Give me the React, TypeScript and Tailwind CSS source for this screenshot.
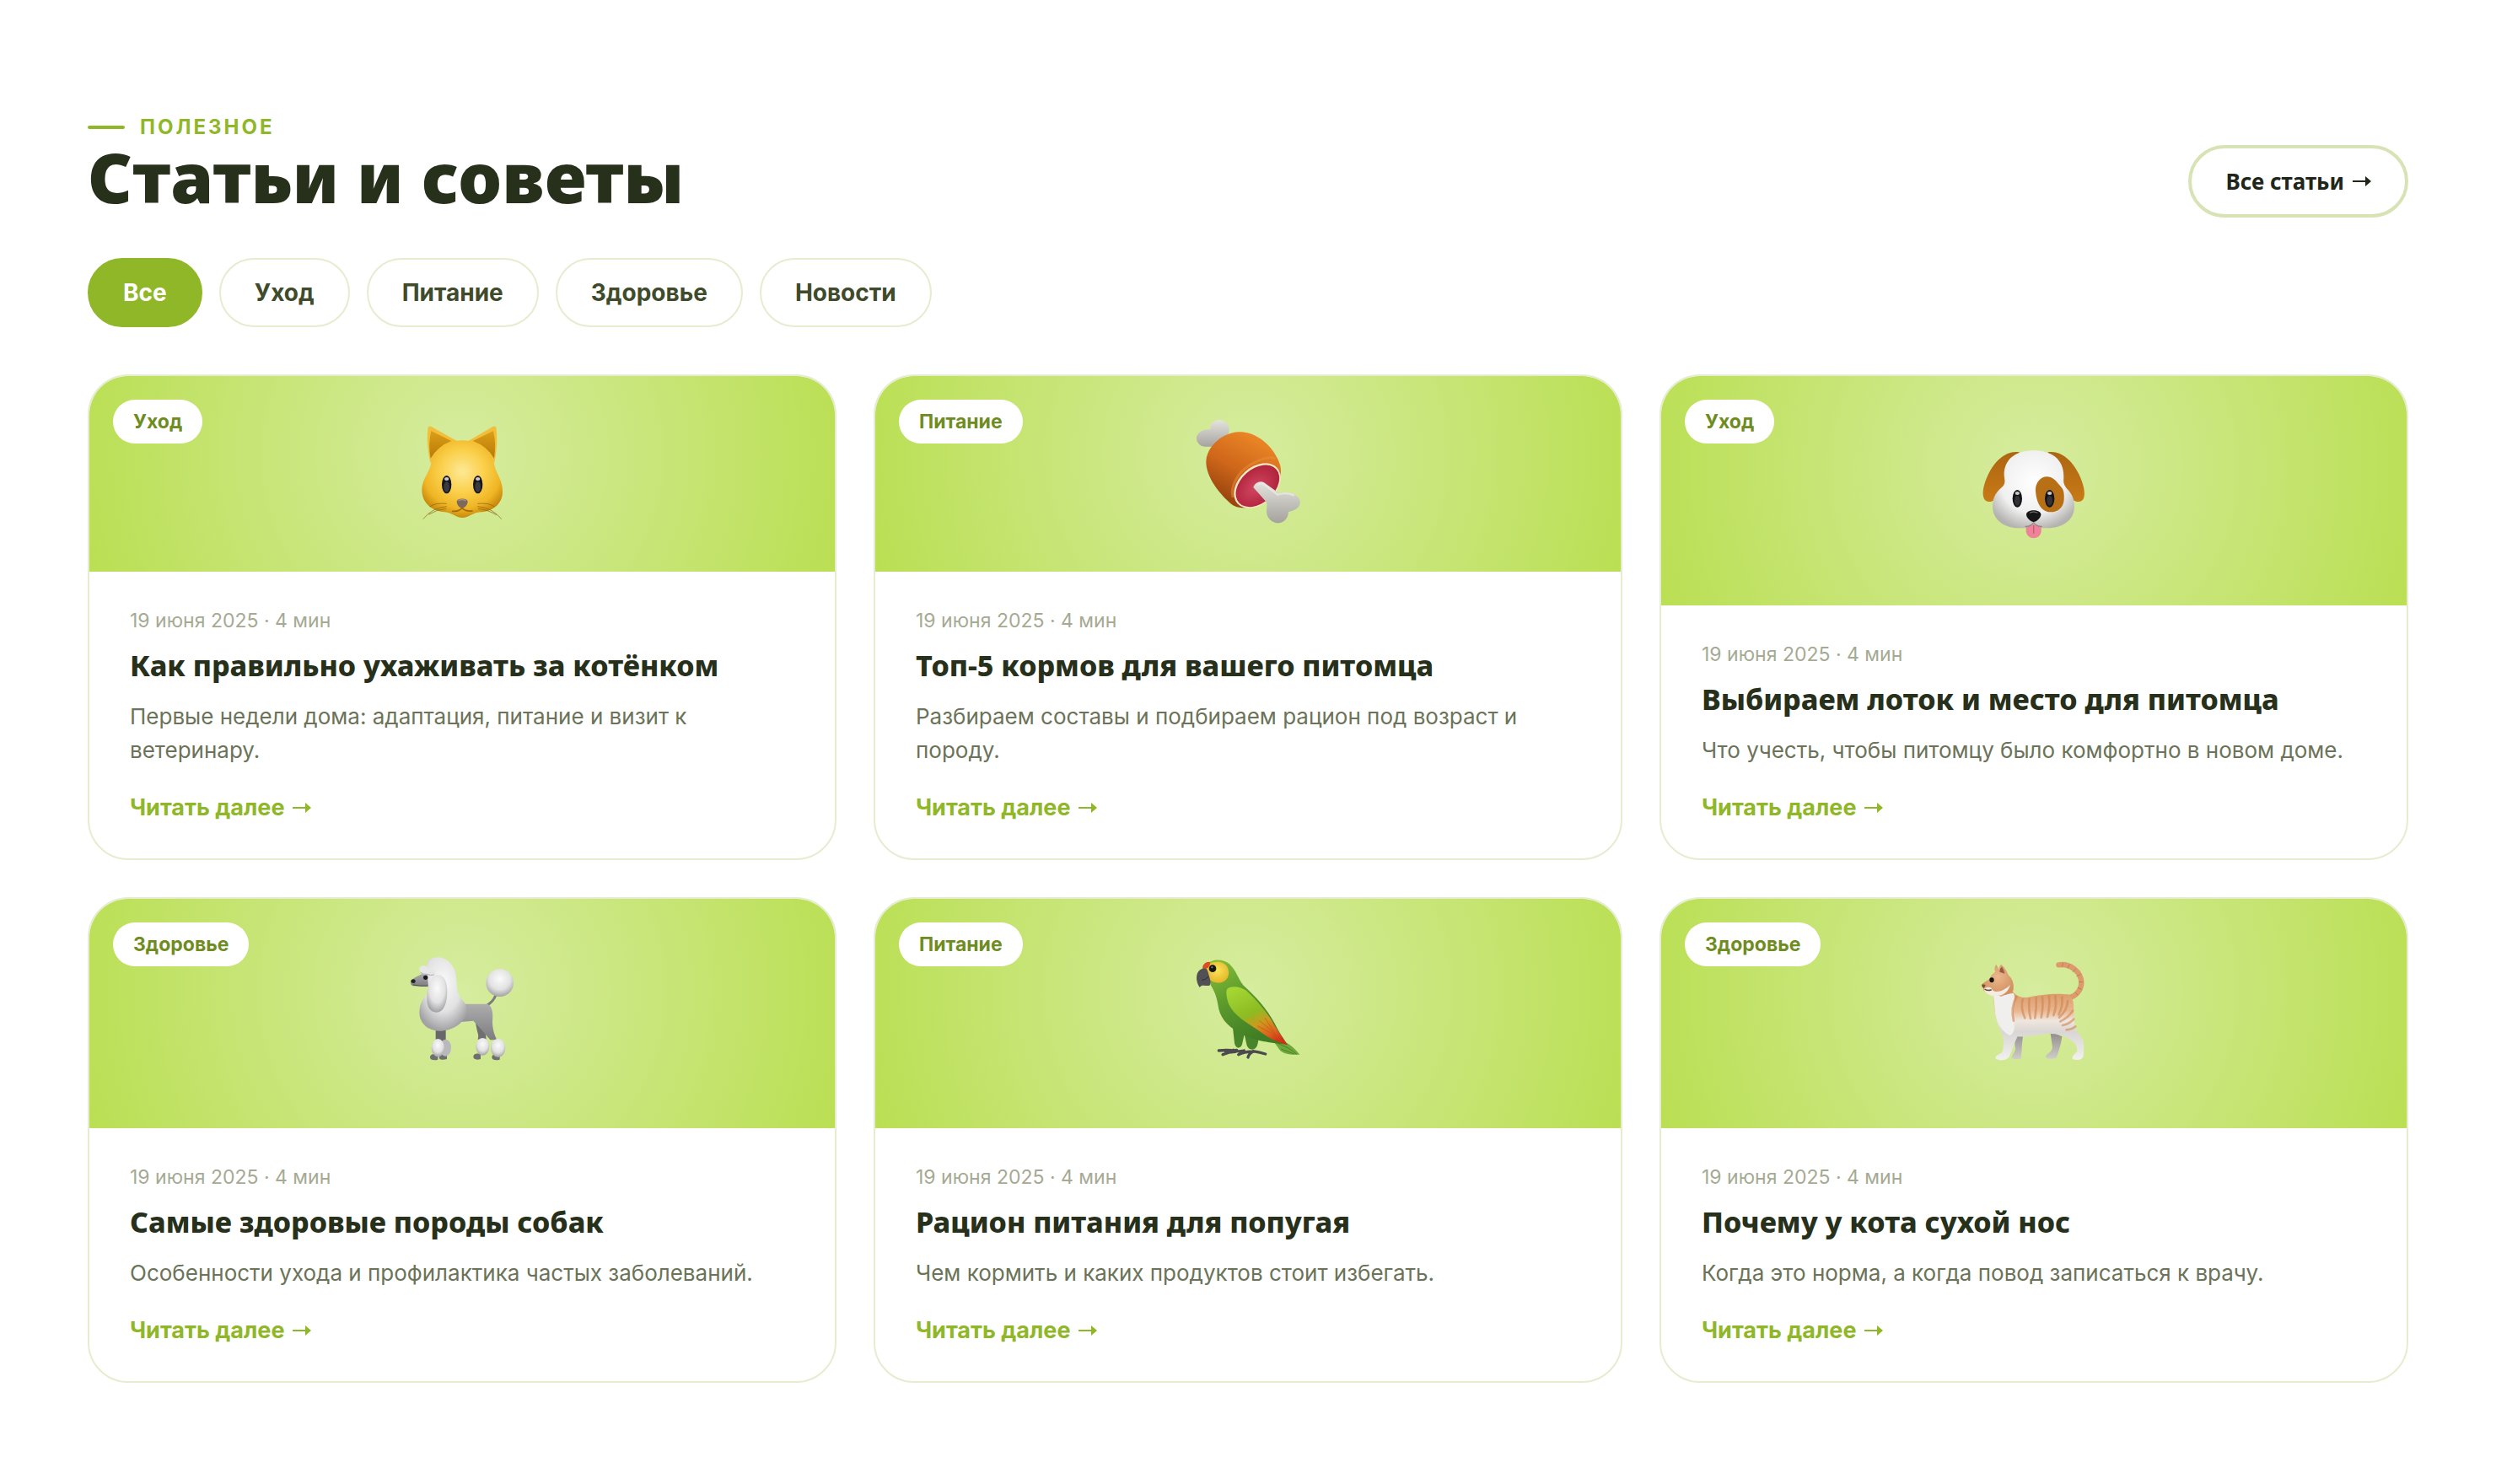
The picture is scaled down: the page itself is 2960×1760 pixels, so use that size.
import React, { useState } from "react";

const categories = ["Все", "Уход", "Питание", "Здоровье", "Новости"];

function CatFace() {
  return (
    <svg viewBox="-6 6 480 480" className="size-40" aria-hidden="true">
      <defs>
        <radialGradient id="catface-skin" cx="0.5" cy="0.4" r="0.6">
          <stop offset="0" stopColor="#fde995" />
          <stop offset="0.45" stopColor="#fbd04c" />
          <stop offset="0.8" stopColor="#efb524" />
          <stop offset="1" stopColor="#c98a0c" />
        </radialGradient>
        <linearGradient id="catface-ear" x1="0" y1="0" x2="0" y2="1">
          <stop offset="0" stopColor="#dc9f16" />
          <stop offset="1" stopColor="#b87a08" />
        </linearGradient>
      </defs>
      <path d="M113 80q5-6 12-2l92 52-96 76q-16-70-8-126z" fill="#f3bf3a" />
      <path d="M355 80q-5-6-12-2l-88 52 94 76q14-70 6-126z" fill="#f3bf3a" />
      <path d="M124 93l72 36q-48 18-74 62-10-54 2-98z" fill="url(#catface-ear)" />
      <path d="M345 93l-73 36q50 18 76 62 8-54-3-98z" fill="url(#catface-ear)" />
      <path
        d="M235 127c64 0 106 38 115 92 7 28 28 50 28 90 0 44-36 72-80 73-26 2-40 20-63 20s-38-18-62-20c-46-3-82-32-82-78 0-38 24-60 31-88 10-54 52-89 113-89z"
        fill="url(#catface-skin)"
      />
      <ellipse cx="179" cy="284" rx="17" ry="32" fill="#17171b" />
      <ellipse cx="179" cy="292" rx="10" ry="19" fill="#3a3a42" />
      <ellipse cx="179" cy="264" rx="8" ry="6" fill="#c9c9ce" />
      <ellipse cx="290" cy="284" rx="17" ry="32" fill="#17171b" />
      <ellipse cx="290" cy="292" rx="10" ry="19" fill="#3a3a42" />
      <ellipse cx="290" cy="264" rx="8" ry="6" fill="#c9c9ce" />
      <path d="M215 345c0-14 39-14 39 0 0 10-10 22-20 22s-19-12-19-22z" fill="#7d6a5c" />
      <path d="M220 342q14-8 28 0" stroke="#a5958a" strokeWidth="4" fill="none" />
      <path d="M234 367q-10 14-34 12M234 367q12 14 36 11" stroke="#a06a0a" strokeWidth="5" fill="none" strokeLinecap="round" />
      <path
        d="M178 352q-40-4-58 10M178 362q-50 4-82 44M176 370q-30 2-60 20M290 352q40-4 58 10M290 362q50 4 84 44M292 370q36 4 64 22"
        stroke="#8a5c12"
        strokeWidth="2"
        fill="none"
        strokeLinecap="round"
      />
    </svg>
  );
}

function Meat() {
  return (
    <svg viewBox="0 6 480 480" className="size-40" aria-hidden="true">
      <defs>
        <linearGradient id="meat-bone" x1="0" y1="0" x2="0" y2="1">
          <stop offset="0" stopColor="#e4e3de" />
          <stop offset="1" stopColor="#a5a29d" />
        </linearGradient>
        <linearGradient id="meat-skin" x1="0.7" y1="0" x2="0.2" y2="1">
          <stop offset="0" stopColor="#ee8a28" />
          <stop offset="0.5" stopColor="#cf661a" />
          <stop offset="1" stopColor="#8a3c0c" />
        </linearGradient>
        <radialGradient id="meat-cut" cx="0.45" cy="0.5" r="0.6">
          <stop offset="0" stopColor="#d24862" />
          <stop offset="1" stopColor="#ac1f38" />
        </radialGradient>
      </defs>
      <path
        d="M106 88c-2-20 14-34 34-34 22 2 34 20 33 40-2 14-10 20-16 28l-32 30c-18-6-32 0-46-4-16-6-24-20-22-34 6-18 28-28 49-26z"
        fill="url(#meat-bone)"
      />
      <path
        d="M206 97c50-2 98 30 126 72 16 26 26 46 25 70-2 44-60 124-130 128-26 0-44-8-62-28-38-38-74-88-74-136 2-56 60-104 115-106z"
        fill="url(#meat-skin)"
      />
      <path d="M186 330c-10-40 18-88 58-114 34-20 72-34 94-24" stroke="#e8913a" strokeWidth="9" fill="none" opacity="0.5" />
      <ellipse cx="273" cy="288" rx="95" ry="66" transform="rotate(-42 273 288)" fill="#fbe6c4" />
      <ellipse cx="274" cy="289" rx="89" ry="60" transform="rotate(-42 274 289)" fill="url(#meat-cut)" />
      <path
        d="M259 294c4-14 22-26 38-17l54 38c20-10 72-2 75 32-2 22-24 30-42 34 0 24-20 42-42 40-24-4-38-26-36-46 0-12 4-22-2-30z"
        fill="url(#meat-bone)"
      />
      <path d="M276 284q10-8 20-2l50 38q30-10 56 2" stroke="#eeede9" strokeWidth="7" fill="none" strokeLinecap="round" opacity="0.7" />
    </svg>
  );
}

function DogFace() {
  return (
    <svg viewBox="6 -25 480 480" className="size-40" aria-hidden="true">
      <defs>
        <radialGradient id="dog-fur" cx="0.5" cy="0.4" r="0.62">
          <stop offset="0" stopColor="#ffffff" />
          <stop offset="0.65" stopColor="#f0f0f0" />
          <stop offset="1" stopColor="#b4b3b0" />
        </radialGradient>
        <linearGradient id="dog-ear" x1="0" y1="0" x2="0" y2="1">
          <stop offset="0" stopColor="#ac6510" />
          <stop offset="1" stopColor="#c97a17" />
        </linearGradient>
      </defs>
      <path d="M194 78c-46-8-86 30-110 78-16 34-24 66-16 86 6 16 26 14 38 6l60-60z" fill="url(#dog-ear)" />
      <path d="M296 78c46-8 86 30 110 78 16 34 24 66 17 86-6 16-26 14-38 6l-62-60z" fill="url(#dog-ear)" />
      <path
        d="M245 72c62 0 108 30 107 92 0 16-4 26 12 44 16 16 26 34 26 62 0 54-46 78-94 78-30 0-36 2-51 2s-24-2-50-2c-52 0-96-26-96-80 0-32 18-54 36-68 12-14 6-26 5-40 0-60 44-88 105-88z"
        fill="url(#dog-fur)"
      />
      <path d="M252 212c0-26 18-48 42-47 26 2 34 22 50 38 10 12 10 28 9 44-2 30-24 44-48 44-36 0-52-40-53-79z" fill="#b87016" />
      <ellipse cx="187" cy="243" rx="17" ry="31" fill="#141416" />
      <ellipse cx="187" cy="250" rx="10" ry="18" fill="#333337" />
      <ellipse cx="187" cy="224" rx="8" ry="6" fill="#c9c9ce" />
      <ellipse cx="302" cy="243" rx="17" ry="31" fill="#141416" />
      <ellipse cx="302" cy="250" rx="10" ry="18" fill="#333337" />
      <ellipse cx="302" cy="224" rx="8" ry="6" fill="#c9c9ce" />
      <path d="M218 342q27-12 54 0v18c-4 32-50 32-54 0z" fill="#ee8298" />
      <path d="M245 338v28" stroke="#c85a74" strokeWidth="4" strokeLinecap="round" />
      <path d="M216 342q18 2 29-14 11 16 29 14" stroke="#8c8a86" strokeWidth="4" fill="none" strokeLinecap="round" />
      <path d="M219 300c0-20 52-20 52 0 0 12-16 26-26 26s-26-14-26-26z" fill="#151515" />
      <path d="M232 293q13-5 26 0" stroke="#6b6b6e" strokeWidth="4" fill="none" strokeLinecap="round" />
    </svg>
  );
}

function Poodle() {
  return (
    <svg viewBox="-6 6 480 480" className="size-40" aria-hidden="true">
      <defs>
        <radialGradient id="poodle-fluff" cx="0.5" cy="0.35" r="0.65">
          <stop offset="0" stopColor="#fafafa" />
          <stop offset="0.6" stopColor="#e2e2e3" />
          <stop offset="1" stopColor="#a2a2a4" />
        </radialGradient>
        <linearGradient id="poodle-skin" x1="0" y1="0" x2="0" y2="1">
          <stop offset="0" stopColor="#adadae" />
          <stop offset="1" stopColor="#7d7d80" />
        </linearGradient>
      </defs>
      <path d="M354 180q-8 22-30 36" stroke="#7c7c7f" strokeWidth="9" fill="none" strokeLinecap="round" />
      <circle cx="368" cy="137" r="49" fill="url(#poodle-fluff)" />
      <path d="M278 260l10 50q6 16 2 28h30l-6-60z" fill="#707073" />
      <path d="M230 212h94c20 8 20 40 18 62 0 26 6 46 16 66h-24c-18-22-40-46-60-68l-46 4z" fill="url(#poodle-skin)" />
      <path d="M140 300h36v46h-36z" fill="#68686b" />
      <path
        d="M120 402c0-12 16-14 28-10v18c-14 4-28 2-28-8zM152 402c0-10 14-12 28-6v12c-12 4-28 4-28-6zM274 400c0-12 14-14 26-10v18c-14 4-26 2-26-8zM340 402c0-12 16-14 28-10v18c-14 4-28 2-28-8z"
        fill="#6f6f72"
      />
      <ellipse cx="175" cy="368" rx="20" ry="30" fill="#b9b9bb" />
      <ellipse cx="148" cy="368" rx="23" ry="32" fill="url(#poodle-fluff)" />
      <ellipse cx="307" cy="364" rx="24" ry="31" fill="url(#poodle-fluff)" />
      <ellipse cx="362" cy="369" rx="26" ry="33" fill="url(#poodle-fluff)" />
      <path d="M108 100c-16 4-38 16-54 26-6 6-4 20 6 22l62 2 10-40z" fill="url(#poodle-skin)" />
      <path d="M52 130c2-6 10-8 14-4s2 12-4 12-10-2-10-8z" fill="#232325" />
      <path d="M60 144q28 6 50 4" stroke="#4b4b4e" strokeWidth="3" fill="none" />
      <path
        d="M108 82c-4-24 16-36 40-36 40 2 66 38 66 84 2 30 2 46 18 64 16 16 20 36 18 48-8 40-52 66-96 66-40 0-72-26-72-66 0-32 16-56 34-70z"
        fill="url(#poodle-fluff)"
      />
      <path d="M82 88c2-16 22-16 30-4 16-2 30 12 26 22-6 10-22 6-30 2-12 4-26-8-26-20z" fill="#e6e6e7" />
      <path d="M86 100q10 8 22 6 14 6 26 2" stroke="#aaaaac" strokeWidth="3" fill="none" />
      <circle cx="104" cy="118" r="8" fill="#1b1b1d" />
      <path d="M148 108c22 0 33 26 33 60 0 40-12 74-38 74-28 0-36-28-34-60 2-38 14-74 39-74z" fill="url(#poodle-fluff)" />
    </svg>
  );
}

function Parrot() {
  return (
    <svg viewBox="0 6 480 480" className="size-40" aria-hidden="true">
      <defs>
        <linearGradient id="parrot-body" x1="0" y1="0" x2="0.5" y2="1">
          <stop offset="0" stopColor="#8cc23a" />
          <stop offset="0.5" stopColor="#5b9a2c" />
          <stop offset="1" stopColor="#3f7d24" />
        </linearGradient>
        <linearGradient id="parrot-wing" x1="0.2" y1="0" x2="0.7" y2="1">
          <stop offset="0" stopColor="#a4d634" />
          <stop offset="0.45" stopColor="#8dbb22" />
          <stop offset="0.65" stopColor="#cf981e" />
          <stop offset="0.85" stopColor="#e0621e" />
          <stop offset="1" stopColor="#d42f16" />
        </linearGradient>
        <radialGradient id="parrot-face" cx="0.5" cy="0.4" r="0.6">
          <stop offset="0" stopColor="#fbe455" />
          <stop offset="1" stopColor="#e5b52a" />
        </radialGradient>
      </defs>
      <path d="M330 330c20 4 60 18 94 62-30 2-62-2-72-18l-22-30z" fill="#6fa83a" />
      <path d="M346 352q40 14 68 40M358 372q24 10 46 18" stroke="#4c8428" strokeWidth="3" fill="none" />
      <path
        d="M188 376q12 8 38 2M160 380l40-4M136 378q36-4 60 2M150 392q22-10 46-10M206 392q28-12 48-10M240 402q4-14 18-20M258 380q24 4 44 10"
        stroke="#4b4b4f"
        strokeWidth="10"
        fill="none"
        strokeLinecap="round"
      />
      <path d="M186 296l6 56q4 16 14 16 12-2 14-16l8-36zM226 316l10 44q6 14 18 14 16-2 20-18l6-30z" fill="#47842a" />
      <path
        d="M92 72c18-22 60-22 82-2 26 26 28 48 50 76 44 40 84 84 110 134 14 28 28 50 46 76-50-4-124-14-160-36-42-22-74-48-84-90-6-36-10-54-28-84z"
        fill="url(#parrot-body)"
      />
      <path d="M90 86c4-26 60-34 76-6 14 28 0 54-30 57-34 0-48-26-46-51z" fill="url(#parrot-face)" />
      <path d="M78 86c0-20 20-28 28-22-2 16-8 24-26 24z" fill="#dd4a24" />
      <path d="M92 86c8 12 8 24 12 34 4 14 4 24-2 27-14 2-26-6-34 6-10-14-14-34-8-50 6-14 20-20 32-17z" fill="#505055" />
      <path d="M76 128q14-2 24-14" stroke="#2d2d30" strokeWidth="3" fill="none" />
      <circle cx="114" cy="86" r="13" fill="#161616" />
      <circle cx="112" cy="82" r="3" fill="#8c8c8c" />
      <path
        d="M166 158c20-14 48-6 68 6 36 34 76 78 100 124 16 26 32 48 46 70-30-8-70-26-100-50-52-34-88-54-108-94-8-20-12-44-6-56z"
        fill="url(#parrot-wing)"
      />
      <path d="M300 262q24 34 40 64M280 272q40 26 76 74M274 290q46 20 88 56" stroke="#b8541a" strokeWidth="3" fill="none" opacity="0.6" />
    </svg>
  );
}

function Cat() {
  return (
    <svg viewBox="6 6 480 480" className="size-40" aria-hidden="true">
      <defs>
        <linearGradient id="cat-coat" x1="0" y1="0" x2="0" y2="1">
          <stop offset="0" stopColor="#d99562" />
          <stop offset="0.3" stopColor="#e8b68e" />
          <stop offset="0.44" stopColor="#f0e6de" />
          <stop offset="0.6" stopColor="#d9d6d3" />
          <stop offset="1" stopColor="#f2f1ef" />
        </linearGradient>
        <linearGradient id="cat-back-leg" x1="0" y1="0" x2="0" y2="1">
          <stop offset="0" stopColor="#8d8a87" />
          <stop offset="1" stopColor="#d0cdca" />
        </linearGradient>
        <radialGradient id="cat-head" cx="0.5" cy="0.4" r="0.6">
          <stop offset="0" stopColor="#ecb78c" />
          <stop offset="1" stopColor="#d0905f" />
        </radialGradient>
      </defs>
      <path d="M334 73c40-6 82 24 81 66-2 26-22 48-44 50" stroke="#dd9a6c" strokeWidth="19" fill="none" strokeLinecap="round" />
      <path
        d="M350 66l-4 14M374 70l-8 14M396 86l-12 12M412 106l-14 8M422 134h-16M416 160l-14-6M402 180l-10-10"
        stroke="#c67b4a"
        strokeWidth="3"
        fill="none"
      />
      <path
        d="M174 316l6 56c-2 14-12 20-12 30 2 8 22 8 32 4 4-26 2-50 8-84zM304 310l8 56c-2 20-22 22-24 34 2 10 26 8 38 4 8-24 16-44 20-76z"
        fill="url(#cat-back-leg)"
      />
      <path
        d="M102 178c20-20 56-26 74-4 14 14 30 16 50 14 36-8 100-16 140-10 20 6 22 30 22 62 0 32 2 62 20 82 18 16 18 44 14 76-2 12-26 16-38 10-6-10 10-20 16-28 0-26-14-34-36-48-32-16-60-16-100-10-26 4-48 8-76 6-12 22-20 52-30 72-8 14-38 16-48 6-2-14 18-14 24-24 6-26 6-46-4-68-16-34-26-68-28-136z"
        fill="url(#cat-coat)"
      />
      <path d="M102 180c14 10 60-8 72-6 10 20-10 60 0 100 6 22 2 44-14 50-24-10-44-40-52-80z" fill="#f1efed" />
      <path
        d="M184 186q-22 40-10 86M206 196q-8 30 8 66M230 194q-4 32 4 70M254 190q2 34-4 72M276 188q4 36-4 72M300 184q4 36-6 74M322 184q6 38-6 68M346 188q4 34-12 62M366 202q0 30-30 58M384 236q-14 24-44 38M388 266q-16 18-40 22M394 292q-14 12-32 12"
        stroke="#cf8350"
        strokeWidth="8"
        fill="none"
        strokeLinecap="round"
        opacity="0.6"
      />
      <path d="M128 182q26-12 34-32" stroke="#e3ac86" strokeWidth="8" fill="none" strokeLinecap="round" />
      <path
        d="M108 98c-4-12 0-22 4-26l10 18c0-10 4-16 8-18 14 12 20 26 26 38 16 14 20 34 16 56-16 14-44 22-76 10-16 0-28-8-30-16 2-6-4-8-6-14 4-12 24-16 30-28 4-10 10-14 18-20z"
        fill="url(#cat-head)"
      />
      <path d="M124 98c0-10 4-16 8-18 6 8 8 16 10 24z" fill="#9c5b44" />
      <path d="M68 158c14-8 26-8 30 4 14 14 44 2 64-18-8 26-24 40-56 40-20-2-36-12-38-26z" fill="#f3ebe4" />
      <path d="M62 142l12 2-6 12q-10-6-6-14z" fill="#7e4a38" />
      <path d="M72 160q10 6 22 2" stroke="#6d4434" strokeWidth="4" fill="none" strokeLinecap="round" />
      <ellipse cx="96" cy="127" rx="8" ry="9" fill="#17150f" />
    </svg>
  );
}

const posts = [
  {
    category: "Уход",
    title: "Как правильно ухаживать за котёнком",
    text: "Первые недели дома: адаптация, питание и визит к ветеринару.",
    Picture: CatFace,
  },
  {
    category: "Питание",
    title: "Топ-5 кормов для вашего питомца",
    text: "Разбираем составы и подбираем рацион под возраст и породу.",
    Picture: Meat,
  },
  {
    category: "Уход",
    title: "Выбираем лоток и место для питомца",
    text: "Что учесть, чтобы питомцу было комфортно в новом доме.",
    Picture: DogFace,
  },
  {
    category: "Здоровье",
    title: "Самые здоровые породы собак",
    text: "Особенности ухода и профилактика частых заболеваний.",
    Picture: Poodle,
  },
  {
    category: "Питание",
    title: "Рацион питания для попугая",
    text: "Чем кормить и каких продуктов стоит избегать.",
    Picture: Parrot,
  },
  {
    category: "Здоровье",
    title: "Почему у кота сухой нос",
    text: "Когда это норма, а когда повод записаться к врачу.",
    Picture: Cat,
  },
];

function Arrow() {
  return (
    <svg viewBox="0 0 22 14" className="h-3.5 w-[22px]" fill="currentColor" aria-hidden="true">
      <path d="M0 6h15V1l7 6-7 6V8H0z" />
    </svg>
  );
}

function PostCard({ post }: { post: (typeof posts)[number] }) {
  const { Picture } = post;
  return (
    <article className="flex flex-col overflow-hidden rounded-[48px] border-2 border-[#e6ecd0] bg-white">
      <div className="relative flex min-h-[232px] grow items-center justify-center bg-[radial-gradient(circle_at_50%_40%,#d6ec9f,#badf53)]">
        <span className="absolute left-7 top-7 rounded-full bg-white px-6 text-[23px] leading-[52px] font-bold text-[#6f8c1f]">
          {post.category}
        </span>
        <Picture />
      </div>
      <div className="px-12 py-10">
        <p className="text-[23px] leading-9 text-[#a5aa93]">19 июня 2025 · 4 мин</p>
        <h3 className="mt-3.5 font-['Noto_Sans',sans-serif] text-[34px] leading-[42px] font-extrabold text-[#27301b]">
          {post.title}
        </h3>
        <p className="mt-5 text-[26px] leading-10 text-[#6b7358]">{post.text}</p>
        <a href="#" className="mt-7 flex items-center gap-2.5 text-[27px] leading-10 font-bold text-[#8fb727]">
          Читать далее <Arrow />
        </a>
      </div>
    </article>
  );
}

export default function App() {
  const [active, setActive] = useState("Все");
  const visible = active === "Все" ? posts : posts.filter((p) => p.category === active);

  return (
    <section className="bg-white px-[104px] pt-[136px] pb-[120px] font-['Inter',sans-serif]">
      <div className="flex items-end justify-between">
        <div>
          <div className="flex items-center gap-[18px]">
            <span className="h-1 w-11 rounded-full bg-[#8fb727]" />
            <span className="text-[24px] leading-[30px] font-bold tracking-[3px] text-[#8fb727] uppercase">Полезное</span>
          </div>
          <h2 className="pb-1.5 font-['Noto_Sans',sans-serif] text-[82px] leading-[86px] font-black text-[#27301b]">
            Статьи и советы
          </h2>
        </div>
        <a
          href="#"
          className="flex items-center gap-2.5 rounded-full border-4 border-[#d8e3b5] px-10 font-['Noto_Sans',sans-serif] text-[26px] leading-[78px] font-bold text-[#20261a]"
        >
          Все статьи <Arrow />
        </a>
      </div>

      <div className="mt-12 flex flex-wrap gap-5">
        {categories.map((c) => (
          <button
            key={c}
            type="button"
            onClick={() => setActive(c)}
            className={
              c === active
                ? "rounded-full border-2 border-[#8fb727] bg-[#8fb727] px-10 text-[28px] leading-[78px] font-bold text-white"
                : "rounded-full border-2 border-[#e6ecd0] bg-white px-10 text-[28px] leading-[78px] font-bold text-[#404b2c]"
            }
          >
            {c}
          </button>
        ))}
      </div>

      <div className="mt-14 grid auto-rows-fr gap-11 md:grid-cols-2 lg:grid-cols-3">
        {visible.map((post) => (
          <PostCard key={post.title} post={post} />
        ))}
      </div>
    </section>
  );
}
